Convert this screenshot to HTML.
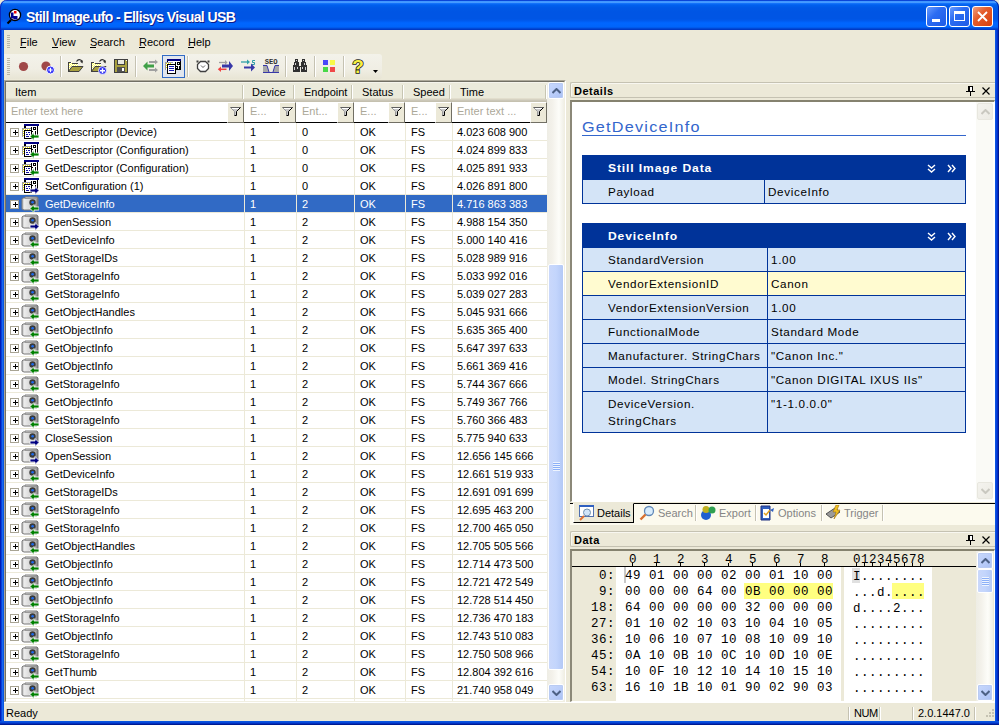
<!DOCTYPE html>
<html><head><meta charset="utf-8">
<style>
*{margin:0;padding:0;box-sizing:border-box}
html,body{width:999px;height:725px;overflow:hidden;background:#ECE9D8}
body{position:relative;font-family:"Liberation Sans",sans-serif;font-size:11px;color:#000}
div,svg,span{position:absolute}
.abs{position:absolute}
/* frame */
#tb{left:0;top:0;width:999px;height:30px;border-radius:7px 7px 0 0;box-shadow:inset 1px 0 0 #0828C0,inset -1px 0 0 #0020A0;
background:linear-gradient(to bottom,#0A45D8 0px,#0A45D8 1px,#3D95FF 1px,#4A9CFF 3px,#1A7AFF 3px,#0B6AF5 4px,#0060EE 5px,#0058E6 8px,#0055E4 12px,#0055E4 19px,#005BF0 21px,#0066FF 23px,#0064FA 27px,#0052E2 28px,#0040CC 29px,#0033BE 30px)}
#fl{left:0;top:30px;width:4px;height:695px;background:linear-gradient(to right,#001DB5 0,#001DB5 1px,#0840DC 1px,#0840DC 2px,#1767F0 2px,#1767F0 3px,#0A55E0 3px)}
#fr{left:995px;top:30px;width:4px;height:695px;background:linear-gradient(to right,#0A55E0 0,#0A55E0 1px,#0840DC 1px,#0840DC 2px,#0030C8 2px,#0030C8 3px,#001890 3px)}
#fb{left:0;top:721px;width:999px;height:4px;background:linear-gradient(to bottom,#0A55E0 0,#0A55E0 1px,#0848D8 1px,#0848D8 2px,#0030C0 2px,#0030C0 3px,#001A90 3px)}
#title{left:26px;top:8px;color:#fff;font-weight:bold;font-size:14px;letter-spacing:-0.6px;line-height:18px;white-space:nowrap;text-shadow:1px 1px 0 #0A1C8C}
.wbtn{top:6px;width:21px;height:21px;border:1px solid #fff;border-radius:3px;background:linear-gradient(135deg,#6A9CFF 0%,#2C6CF2 40%,#1E5AE6 100%)}
.wbtn.close{background:linear-gradient(135deg,#F0A080 0%,#E45C2C 40%,#D8400F 100%)}
/* menu */
.grip{width:3px;background:repeating-linear-gradient(to bottom,#B9B6A6 0,#B9B6A6 1px,transparent 1px,transparent 2px)}
.menu{top:36px;line-height:12px;white-space:nowrap}
.menu u{text-decoration:none}
.ul{top:47px;height:1px;width:6px;background:#000}
#tbband{left:4px;top:54px;width:378px;height:25px;background:linear-gradient(to bottom,#F3F2EA 0,#F0EEE4 60%,#E8E5D5 100%);border-radius:0 3px 3px 0}
.sep{top:56px;width:1px;height:21px;background:#C5C2B2;border-right:1px solid #fff;width:2px}
/* grid */
#grid{left:4px;top:80px;width:562px;height:623px;border-top:1px solid #ACA899;border-left:1px solid #ACA899;border-right:1px solid #fff;border-bottom:1px solid #fff;background:#fff}
#gridin{left:0;top:0;width:560px;height:621px;border-top:1px solid #716F64;border-left:1px solid #716F64;border-right:1px solid #F1EFE2;border-bottom:1px solid #F1EFE2}
.hdr{top:82px;height:20px;background:linear-gradient(to bottom,#F5F4EC 0,#F5F4EC 1px,#EBEADB 1px,#EBEADB 16px,#E2DECD 16px,#E2DECD 17px,#D6D2C2 17px,#D6D2C2 18px,#CBC7B8 18px,#CBC7B8 19px,#C5C1B0 19px)}
.htxt{top:83px;line-height:19px;white-space:nowrap}
.hsep{top:85px;width:1px;height:14px;background:#C7C5B2;border-right:1px solid #fff;width:2px}
.ftxt{top:101px;line-height:21px;color:#ACA899;white-space:nowrap}
.fbtn{top:102px;width:17px;height:21px;background:#ECE9D8;border-left:1px solid #fff;border-top:1px solid #fff;border-right:1px solid #716F64;border-bottom:1px solid #716F64}
.fline{top:122px;height:1px;background:#000}
.row{left:6px;width:541px;height:17px;background:#fff}
.row.sel{background:#316AC5}
.hl{left:6px;width:541px;height:1px;background:#ECE9D8}
.vl{top:123px;width:1px;height:578px;background:#ECE9D8}
.pbox{left:10px;width:9px;height:9px;border:1px solid #A8A493;background:#fff}
.pbox:before{content:"";position:absolute;left:2px;top:3px;width:5px;height:1px;background:#000}
.pbox:after{content:"";position:absolute;left:4px;top:1px;width:1px;height:5px;background:#000}
.t{line-height:17px;height:17px;white-space:nowrap}
.t.w{color:#fff}
/* scrollbars */
.strack{background:linear-gradient(to right,#EEEDE5 0,#F3F1EA 30%,#FDFDF9 70%,#F0EFE6 100%)}
.sbtn{width:16px;height:17px;border-radius:2px;border:1px solid #fff;background:linear-gradient(135deg,#C8D8FC 0,#BBCEFA 50%,#A9C0F3 100%);box-shadow:0 0 0 1px #B9CBF3 inset}
.sthumb{border-radius:2px;border:1px solid #fff;background:linear-gradient(to right,#CAD8FB 0,#C3D5FC 50%,#B4C9F6 100%)}
.sdis{width:16px;height:17px;border-radius:2px;border:1px solid #E8E7DF;background:linear-gradient(135deg,#F4F3EE 0,#ECEBE4 100%)}
/* details */
.phdr{height:16px;background:#ECE9D8;border-top:1px solid #C5C2B2;border-bottom:1px solid #C5C2B2;border-left:1px solid #C5C2B2;border-radius:2px 0 0 2px;box-shadow:inset 1px 1px 0 #F8F7F0}
.ptitle{font-weight:bold;line-height:14px;white-space:nowrap;letter-spacing:0.5px}
.pbody{background:#fff;border-top:2px solid #8B8878;border-left:2px solid #8B8878;border-top-color:#85826F;border-right:1px solid #fff;border-bottom:1px solid #fff}
.vt{font-size:11px;white-space:nowrap;line-height:14px;letter-spacing:0.62px;transform:scaleX(1.06);transform-origin:0 0}
.vtb{font-weight:bold;color:#fff;letter-spacing:0.8px;transform:scaleX(1.1)}
.dh{background:#003399;height:25px}
.dr{background:#D4E4F7;border-left:1px solid #003399;border-right:1px solid #003399;border-bottom:1px solid #003399}
.dr.y{background:#FFFBD0}
.dv{width:1px;background:#003399}
.mono{font-family:"Liberation Mono",monospace;font-size:12.5px;letter-spacing:0.5px;line-height:16px;white-space:pre}
/* tabs */
.tabt{top:505px;line-height:16px;color:#858585;white-space:nowrap}
/* status */
.stxt{top:704px;line-height:18px;white-space:nowrap}
.ssep{top:707px;width:2px;height:13px;border-left:1px solid #C5C2B2;border-right:1px solid #fff}
</style></head><body>
<!-- title bar -->
<div id="tb"></div>
<svg style="left:6px;top:8px" width="17" height="17" viewBox="0 0 17 17"><path d="M1.5 15.5L5 12" stroke="#000" stroke-width="2.2"/><circle cx="9" cy="7" r="5.6" fill="#fff" stroke="#000" stroke-width="1.3"/><path d="M5 4.5h2.5v6H5zM7.5 8h4v3.5h-4z" fill="#000090"/><rect x="8" y="3" width="2.5" height="2.5" fill="#f00000"/></svg>
<div id="title">Still Image.ufo - Ellisys Visual USB</div>
<div class="wbtn" style="left:926px"><div style="left:5px;top:12px;width:8px;height:3px;background:#fff"></div></div>
<div class="wbtn" style="left:949px"><div style="left:4px;top:4px;width:11px;height:10px;border:1px solid #fff;border-top-width:3px"></div></div>
<div class="wbtn close" style="left:972px"><svg style="left:4px;top:4px" width="11" height="11" viewBox="0 0 11 11"><path d="M1 1L10 10M10 1L1 10" stroke="#fff" stroke-width="1.8"/></svg></div>
<div id="fl"></div><div id="fr"></div><div id="fb"></div>

<!-- menu bar -->
<div class="grip" style="left:7px;top:35px;height:13px"></div>
<div class="menu" style="left:20px"><u>F</u>ile</div>
<div class="menu" style="left:52px"><u>V</u>iew</div>
<div class="menu" style="left:90px"><u>S</u>earch</div>
<div class="menu" style="left:139px"><u>R</u>ecord</div>
<div class="menu" style="left:188px"><u>H</u>elp</div>
<div class="ul" style="left:20px"></div><div class="ul" style="left:52px"></div><div class="ul" style="left:90px"></div><div class="ul" style="left:139px"></div><div class="ul" style="left:188px"></div>

<!-- toolbar -->
<div id="tbband"></div>
<div class="grip" style="left:7px;top:58px;height:17px"></div>
<svg style="left:18px;top:61px" width="11" height="11"><circle cx="5.5" cy="5.5" r="4.6" fill="#A04848"/></svg>
<svg style="left:40px;top:60px" width="16" height="15"><circle cx="6" cy="6" r="4.6" fill="#A04848"/><circle cx="10.5" cy="10" r="4" fill="#3434F8" stroke="#fff" stroke-width="1"/><path d="M8.3 10h4.4M10.5 7.8v4.4" stroke="#fff" stroke-width="1.2"/></svg>
<div class="sep" style="left:60px"></div>
<svg style="left:67px;top:58px" width="17" height="15" viewBox="0 0 17 15" shape-rendering="crispEdges"><defs><pattern id="chk" width="2" height="2" patternUnits="userSpaceOnUse"><rect width="2" height="2" fill="#FFFF60"/><rect width="1" height="1" fill="#fff"/><rect x="1" y="1" width="1" height="1" fill="#fff"/></pattern></defs><path d="M1 4h3l1 1h6v9H1z" fill="url(#chk)"/><path d="M1 4h3M5 5h6M1 4v10" stroke="#404040" fill="none"/><path d="M1.5 13.5L5 8.5h11l-4 5z" fill="#A8A040" stroke="#404040" stroke-width="1" shape-rendering="geometricPrecision"/><path d="M9.5 3.5Q12 0 15 3" fill="none" stroke="#303030" stroke-width="1.2" shape-rendering="geometricPrecision"/><path d="M13 3.5L16 2.5 15.5 5.5z" fill="#303030" shape-rendering="geometricPrecision"/></svg>
<svg style="left:90px;top:58px" width="17" height="17" viewBox="0 0 17 17" shape-rendering="crispEdges"><path d="M1 4h3l1 1h6v9H1z" fill="url(#chk)"/><path d="M1 4h3M5 5h6M1 4v10" stroke="#404040" fill="none"/><path d="M1.5 13.5L5 8.5h11l-4 5z" fill="#A8A040" stroke="#404040" stroke-width="1" shape-rendering="geometricPrecision"/><path d="M9.5 3.5Q12 0 15 3" fill="none" stroke="#303030" stroke-width="1.2" shape-rendering="geometricPrecision"/><path d="M13 3.5L16 2.5 15.5 5.5z" fill="#303030" shape-rendering="geometricPrecision"/><circle cx="12.5" cy="12.5" r="4" fill="#3434F0" stroke="#fff" stroke-width="0.8" shape-rendering="geometricPrecision"/><path d="M10 12h5v1.4h-5zM11.8 10.2h1.4v5h-1.4z" fill="#fff" shape-rendering="geometricPrecision"/></svg>
<svg style="left:114px;top:59px" width="14" height="14" viewBox="0 0 14 14" shape-rendering="crispEdges"><rect x="0" y="0" width="14" height="14" fill="#404040"/><rect x="1" y="1" width="12" height="12" fill="#A8A040"/><rect x="3" y="0" width="8" height="6" fill="#404040"/><rect x="4" y="1" width="6" height="4" fill="#E8E8E0"/><rect x="3" y="8" width="8" height="5" fill="#505050"/><rect x="8" y="9" width="2" height="3" fill="#fff"/><rect x="12" y="1" width="1" height="1" fill="#fff"/></svg>
<div class="sep" style="left:135px"></div>
<svg style="left:142px;top:58px" width="17" height="16" viewBox="0 0 17 16" shape-rendering="crispEdges"><path d="M7 3h6v2H7zM7 11h6v2H7z" fill="#A0A0A0"/><path d="M13 1.5L16 4 13 6.5zM13 9.5L16 12 13 14.5z" fill="#A0A0A0" shape-rendering="geometricPrecision"/><path d="M1 8L5.5 3.5V6.5H12V9.5H5.5V12.5z" fill="#40A048" shape-rendering="geometricPrecision"/></svg>
<div style="left:162px;top:55px;width:23px;height:23px;border:1px solid #316AC5;background:#E1E6EE"></div>
<svg style="left:165px;top:58px" width="17" height="16" viewBox="0 0 17 16" shape-rendering="crispEdges"><rect x="2" y="1" width="14" height="2" fill="#000080"/><rect x="2" y="3" width="14" height="9" fill="#000"/><rect x="3" y="3" width="12" height="8" fill="#fff"/><path d="M10 4h1v3h-1zM12 4h3v3h-3zM10 8h3v3h-3zM14 8h1v3h-1z" fill="#000"/><rect x="13" y="5" width="1" height="1" fill="#fff"/><rect x="11" y="9" width="1" height="1" fill="#fff"/><rect x="0" y="4" width="8" height="8" fill="#9C9CA8"/><rect x="1" y="5" width="7" height="7" fill="#fff"/><path d="M1 5h1v1H1zM3 5h1v1H3zM5 5h1v1H5zM1 7h1v1H1zM1 9h1v1H1z" fill="#F0E000"/><rect x="2" y="6" width="9" height="10" fill="#000"/><rect x="3" y="7" width="7" height="8" fill="#fff"/><path d="M4 8h5v1H4zM4 10h5v1H4zM4 12h5v1H4z" fill="#1818B0"/></svg>
<div class="sep" style="left:187px"></div>
<svg style="left:196px;top:60px" width="14" height="13" viewBox="0 0 14 13"><path d="M4.5 1.5H9.5L12.5 4.5V8.5L9.5 11.5H4.5L1.5 8.5V4.5Z" fill="#fff" stroke="#404040" stroke-width="1.3"/><rect x="0.5" y="0.5" width="2" height="2" fill="#404040"/><rect x="11.5" y="0.5" width="2" height="2" fill="#404040"/><path d="M5 5.5L7 7.5 9 5.5" fill="none" stroke="#505050" stroke-width="0.9"/></svg>
<svg style="left:217px;top:59px" width="17" height="14" viewBox="0 0 17 14"><path d="M2 3.5H8" stroke="#A0A0A0" stroke-width="1.3"/><path d="M8 1L10.5 3.5 8 6z" fill="#A0A0A0"/><path d="M5 5.5H12.5V8.5H5z" fill="#3838A8"/><path d="M12 2L16 7 12 12z" fill="#3838A8"/><path d="M3 10.3H9.5" stroke="#F04040" stroke-width="1.5"/><path d="M4 7.5L0.8 10.3 4 13z" fill="#F04040"/></svg>
<svg style="left:240px;top:58px" width="17" height="15" viewBox="0 0 17 15"><path d="M1 4H8" stroke="#30A0A8" stroke-width="1.3"/><path d="M7 1.5L10 4 7 6.5z" fill="#30A0A8"/><path d="M15 2.5H12.5V4.5H14.5V6.5H12" fill="none" stroke="#30A0A8" stroke-width="1"/><path d="M4 8.5H12V10.5H4z" fill="#3838A8"/><path d="M11 5.5L15 9.5 11 13.5z" fill="#3838A8"/></svg>
<svg style="left:262px;top:58px" width="18" height="16" viewBox="0 0 18 16"><text x="2.7" y="6.3" font-size="7.2" font-weight="bold" fill="#303030" font-family="Liberation Mono">SEO</text><path d="M1 8H5L7 14H1ZM17 8H13L11 14H17Z" fill="#A8A8A8"/><path d="M1 7.5H5L7 14M11 14L13 7.5H17M1 14.5H17" fill="none" stroke="#3838A8" stroke-width="1"/></svg>
<div class="sep" style="left:285px"></div>
<svg style="left:292px;top:59px" width="17" height="14" viewBox="0 0 17 14" shape-rendering="crispEdges"><path d="M3 0h3v3h1v4h2V3h1V0h3v3h1v3h1v7h-6V8H8v5H1V6h1V3h1z" fill="#303030"/><path d="M4 1h1v1H4zM11 1h1v1h-1zM3 4h1v2H3zM12 4h1v2h-1zM2 8h1v3H2zM5 8h1v2H5zM10 8h1v2h-1zM13 8h1v3h-1z" fill="#D0D0D0"/></svg>
<div class="sep" style="left:314px"></div>
<svg style="left:322px;top:59px" width="14" height="14"><rect x="1" y="1" width="5" height="5" fill="#4848F8"/><rect x="8" y="1" width="5" height="5" fill="#F8F848"/><rect x="1" y="8" width="5" height="5" fill="#48D848"/><rect x="8" y="8" width="5" height="5" fill="#F04848"/></svg>
<div class="sep" style="left:343px"></div>
<svg style="left:351px;top:57px" width="14" height="17" viewBox="0 0 14 17"><text x="1.2" y="15.5" font-size="19" font-weight="bold" fill="#F8F040" stroke="#202020" stroke-width="1.6" paint-order="stroke" font-family="Liberation Sans">?</text></svg>
<svg style="left:373px;top:70px" width="6" height="4"><path d="M0 0h5L2.5 3z" fill="#000"/></svg>

<!-- grid -->
<div id="grid"><div id="gridin"></div></div>
<div class="hdr" style="left:6px;width:541px"></div>
<div class="hsep" style="left:242px"></div>
<div class="hsep" style="left:293px"></div>
<div class="hsep" style="left:351px"></div>
<div class="hsep" style="left:402px"></div>
<div class="hsep" style="left:449px"></div>
<div class="hsep" style="left:545px"></div>
<div class="htxt" style="left:15px">Item</div>
<div class="htxt" style="left:252px">Device</div>
<div class="htxt" style="left:304px">Endpoint</div>
<div class="htxt" style="left:362px">Status</div>
<div class="htxt" style="left:413px">Speed</div>
<div class="htxt" style="left:460px">Time</div>
<div class="ftxt" style="left:11px">Enter text here</div>
<div class="ftxt" style="left:250px">E...</div>
<div class="ftxt" style="left:302px">Ent...</div>
<div class="ftxt" style="left:360px">E...</div>
<div class="ftxt" style="left:411px">E...</div>
<div class="ftxt" style="left:457px">Enter text ...</div>
<div class="fline" style="left:6px;width:222px"></div>
<div class="fline" style="left:244px;width:37px"></div>
<div class="fline" style="left:296px;width:42px"></div>
<div class="fline" style="left:354px;width:35px"></div>
<div class="fline" style="left:405px;width:31px"></div>
<div class="fline" style="left:452px;width:79px"></div>
<div class="fbtn" style="left:227px"><svg style="left:1px;top:3px" width="13" height="11" viewBox="0 0 13 11"><path d="M1.5 1.5H11.5L7.5 5.5V9.5H5.5V5.5Z" fill="#C8C8C8"/><path d="M1.5 1.5L5.5 5.5V9.5" fill="none" stroke="#9A9A9A"/><path d="M1.5 1.5H11.5" stroke="#606060"/><path d="M11.5 1.5L7.5 5.5V9.5H5.5" fill="none" stroke="#000"/><path d="M3 2.5H10" stroke="#fff"/></svg></div><div class="fbtn" style="left:279px"><svg style="left:1px;top:3px" width="13" height="11" viewBox="0 0 13 11"><path d="M1.5 1.5H11.5L7.5 5.5V9.5H5.5V5.5Z" fill="#C8C8C8"/><path d="M1.5 1.5L5.5 5.5V9.5" fill="none" stroke="#9A9A9A"/><path d="M1.5 1.5H11.5" stroke="#606060"/><path d="M11.5 1.5L7.5 5.5V9.5H5.5" fill="none" stroke="#000"/><path d="M3 2.5H10" stroke="#fff"/></svg></div><div class="fbtn" style="left:337px"><svg style="left:1px;top:3px" width="13" height="11" viewBox="0 0 13 11"><path d="M1.5 1.5H11.5L7.5 5.5V9.5H5.5V5.5Z" fill="#C8C8C8"/><path d="M1.5 1.5L5.5 5.5V9.5" fill="none" stroke="#9A9A9A"/><path d="M1.5 1.5H11.5" stroke="#606060"/><path d="M11.5 1.5L7.5 5.5V9.5H5.5" fill="none" stroke="#000"/><path d="M3 2.5H10" stroke="#fff"/></svg></div><div class="fbtn" style="left:388px"><svg style="left:1px;top:3px" width="13" height="11" viewBox="0 0 13 11"><path d="M1.5 1.5H11.5L7.5 5.5V9.5H5.5V5.5Z" fill="#C8C8C8"/><path d="M1.5 1.5L5.5 5.5V9.5" fill="none" stroke="#9A9A9A"/><path d="M1.5 1.5H11.5" stroke="#606060"/><path d="M11.5 1.5L7.5 5.5V9.5H5.5" fill="none" stroke="#000"/><path d="M3 2.5H10" stroke="#fff"/></svg></div><div class="fbtn" style="left:435px"><svg style="left:1px;top:3px" width="13" height="11" viewBox="0 0 13 11"><path d="M1.5 1.5H11.5L7.5 5.5V9.5H5.5V5.5Z" fill="#C8C8C8"/><path d="M1.5 1.5L5.5 5.5V9.5" fill="none" stroke="#9A9A9A"/><path d="M1.5 1.5H11.5" stroke="#606060"/><path d="M11.5 1.5L7.5 5.5V9.5H5.5" fill="none" stroke="#000"/><path d="M3 2.5H10" stroke="#fff"/></svg></div><div class="fbtn" style="left:530px"><svg style="left:1px;top:3px" width="13" height="11" viewBox="0 0 13 11"><path d="M1.5 1.5H11.5L7.5 5.5V9.5H5.5V5.5Z" fill="#C8C8C8"/><path d="M1.5 1.5L5.5 5.5V9.5" fill="none" stroke="#9A9A9A"/><path d="M1.5 1.5H11.5" stroke="#606060"/><path d="M11.5 1.5L7.5 5.5V9.5H5.5" fill="none" stroke="#000"/><path d="M3 2.5H10" stroke="#fff"/></svg></div>
<div class="row" style="top:123px"></div><div class="row" style="top:141px"></div><div class="row" style="top:159px"></div><div class="row" style="top:177px"></div><div class="row sel" style="top:195px"></div><div class="row" style="top:213px"></div><div class="row" style="top:231px"></div><div class="row" style="top:249px"></div><div class="row" style="top:267px"></div><div class="row" style="top:285px"></div><div class="row" style="top:303px"></div><div class="row" style="top:321px"></div><div class="row" style="top:339px"></div><div class="row" style="top:357px"></div><div class="row" style="top:375px"></div><div class="row" style="top:393px"></div><div class="row" style="top:411px"></div><div class="row" style="top:429px"></div><div class="row" style="top:447px"></div><div class="row" style="top:465px"></div><div class="row" style="top:483px"></div><div class="row" style="top:501px"></div><div class="row" style="top:519px"></div><div class="row" style="top:537px"></div><div class="row" style="top:555px"></div><div class="row" style="top:573px"></div><div class="row" style="top:591px"></div><div class="row" style="top:609px"></div><div class="row" style="top:627px"></div><div class="row" style="top:645px"></div><div class="row" style="top:663px"></div><div class="row" style="top:681px"></div><div class="hl" style="top:140px"></div><div class="hl" style="top:158px"></div><div class="hl" style="top:176px"></div><div class="hl" style="top:194px"></div><div class="hl" style="top:212px"></div><div class="hl" style="top:230px"></div><div class="hl" style="top:248px"></div><div class="hl" style="top:266px"></div><div class="hl" style="top:284px"></div><div class="hl" style="top:302px"></div><div class="hl" style="top:320px"></div><div class="hl" style="top:338px"></div><div class="hl" style="top:356px"></div><div class="hl" style="top:374px"></div><div class="hl" style="top:392px"></div><div class="hl" style="top:410px"></div><div class="hl" style="top:428px"></div><div class="hl" style="top:446px"></div><div class="hl" style="top:464px"></div><div class="hl" style="top:482px"></div><div class="hl" style="top:500px"></div><div class="hl" style="top:518px"></div><div class="hl" style="top:536px"></div><div class="hl" style="top:554px"></div><div class="hl" style="top:572px"></div><div class="hl" style="top:590px"></div><div class="hl" style="top:608px"></div><div class="hl" style="top:626px"></div><div class="hl" style="top:644px"></div><div class="hl" style="top:662px"></div><div class="hl" style="top:680px"></div><div class="hl" style="top:698px"></div><div class="vl" style="left:244px"></div><div class="vl" style="left:296px"></div><div class="vl" style="left:354px"></div><div class="vl" style="left:405px"></div><div class="vl" style="left:452px"></div><div class="pbox" style="top:128px"></div><svg class="ic" style="left:21px;top:123px" width="18" height="18" viewBox="0 0 18 18" shape-rendering="crispEdges"><rect x="3" y="1" width="15" height="2" fill="#000080"/><rect x="3" y="3" width="15" height="9" fill="#fff"/><rect x="3" y="3" width="2" height="8" fill="#000"/><rect x="16" y="3" width="1" height="9" fill="#000"/><rect x="10" y="4" width="1" height="3" fill="#000"/><rect x="12" y="4" width="3" height="3" fill="#000"/><rect x="13" y="5" width="1" height="1" fill="#fff"/><rect x="10" y="8" width="2" height="1" fill="#000"/><rect x="10" y="9" width="1" height="2" fill="#000"/><rect x="14" y="8" width="1" height="4" fill="#000"/><rect x="1" y="5" width="9" height="9" fill="#9C9CA8"/><rect x="2" y="6" width="8" height="8" fill="#fff"/><path d="M2 6h1v1H2zM4 6h1v1H4zM6 6h1v1H6zM8 6h1v1H8zM2 8h1v1H2zM2 10h1v1H2zM2 12h1v1H2z" fill="#F0E000"/><rect x="3" y="7" width="8" height="9" fill="#000"/><rect x="4" y="8" width="6" height="7" fill="#fff"/><path d="M5 9h1v1H5zM7 9h2v1H7zM5 11h2v1H5zM8 11h1v1H8zM5 13h3v1H5z" fill="#1010A0"/><path d="M9 13.5L13 9.5V12h5v3h-5v2.5z" fill="#008000" stroke="#fff" stroke-width="0.8" shape-rendering="geometricPrecision"/></svg><div class="t" style="left:45px;top:124px">GetDescriptor (Device)</div><div class="t" style="left:250px;top:124px">1</div><div class="t" style="left:302px;top:124px">0</div><div class="t" style="left:360px;top:124px">OK</div><div class="t" style="left:411px;top:124px">FS</div><div class="t" style="left:457px;top:124px">4.023 608 900</div><div class="pbox" style="top:146px"></div><svg class="ic" style="left:21px;top:141px" width="18" height="18" viewBox="0 0 18 18" shape-rendering="crispEdges"><rect x="3" y="1" width="15" height="2" fill="#000080"/><rect x="3" y="3" width="15" height="9" fill="#fff"/><rect x="3" y="3" width="2" height="8" fill="#000"/><rect x="16" y="3" width="1" height="9" fill="#000"/><rect x="10" y="4" width="1" height="3" fill="#000"/><rect x="12" y="4" width="3" height="3" fill="#000"/><rect x="13" y="5" width="1" height="1" fill="#fff"/><rect x="10" y="8" width="2" height="1" fill="#000"/><rect x="10" y="9" width="1" height="2" fill="#000"/><rect x="14" y="8" width="1" height="4" fill="#000"/><rect x="1" y="5" width="9" height="9" fill="#9C9CA8"/><rect x="2" y="6" width="8" height="8" fill="#fff"/><path d="M2 6h1v1H2zM4 6h1v1H4zM6 6h1v1H6zM8 6h1v1H8zM2 8h1v1H2zM2 10h1v1H2zM2 12h1v1H2z" fill="#F0E000"/><rect x="3" y="7" width="8" height="9" fill="#000"/><rect x="4" y="8" width="6" height="7" fill="#fff"/><path d="M5 9h1v1H5zM7 9h2v1H7zM5 11h2v1H5zM8 11h1v1H8zM5 13h3v1H5z" fill="#1010A0"/><path d="M9 13.5L13 9.5V12h5v3h-5v2.5z" fill="#008000" stroke="#fff" stroke-width="0.8" shape-rendering="geometricPrecision"/></svg><div class="t" style="left:45px;top:142px">GetDescriptor (Configuration)</div><div class="t" style="left:250px;top:142px">1</div><div class="t" style="left:302px;top:142px">0</div><div class="t" style="left:360px;top:142px">OK</div><div class="t" style="left:411px;top:142px">FS</div><div class="t" style="left:457px;top:142px">4.024 899 833</div><div class="pbox" style="top:164px"></div><svg class="ic" style="left:21px;top:159px" width="18" height="18" viewBox="0 0 18 18" shape-rendering="crispEdges"><rect x="3" y="1" width="15" height="2" fill="#000080"/><rect x="3" y="3" width="15" height="9" fill="#fff"/><rect x="3" y="3" width="2" height="8" fill="#000"/><rect x="16" y="3" width="1" height="9" fill="#000"/><rect x="10" y="4" width="1" height="3" fill="#000"/><rect x="12" y="4" width="3" height="3" fill="#000"/><rect x="13" y="5" width="1" height="1" fill="#fff"/><rect x="10" y="8" width="2" height="1" fill="#000"/><rect x="10" y="9" width="1" height="2" fill="#000"/><rect x="14" y="8" width="1" height="4" fill="#000"/><rect x="1" y="5" width="9" height="9" fill="#9C9CA8"/><rect x="2" y="6" width="8" height="8" fill="#fff"/><path d="M2 6h1v1H2zM4 6h1v1H4zM6 6h1v1H6zM8 6h1v1H8zM2 8h1v1H2zM2 10h1v1H2zM2 12h1v1H2z" fill="#F0E000"/><rect x="3" y="7" width="8" height="9" fill="#000"/><rect x="4" y="8" width="6" height="7" fill="#fff"/><path d="M5 9h1v1H5zM7 9h2v1H7zM5 11h2v1H5zM8 11h1v1H8zM5 13h3v1H5z" fill="#1010A0"/><path d="M9 13.5L13 9.5V12h5v3h-5v2.5z" fill="#008000" stroke="#fff" stroke-width="0.8" shape-rendering="geometricPrecision"/></svg><div class="t" style="left:45px;top:160px">GetDescriptor (Configuration)</div><div class="t" style="left:250px;top:160px">1</div><div class="t" style="left:302px;top:160px">0</div><div class="t" style="left:360px;top:160px">OK</div><div class="t" style="left:411px;top:160px">FS</div><div class="t" style="left:457px;top:160px">4.025 891 933</div><div class="pbox" style="top:182px"></div><svg class="ic" style="left:21px;top:177px" width="18" height="18" viewBox="0 0 18 18" shape-rendering="crispEdges"><rect x="3" y="1" width="15" height="2" fill="#000080"/><rect x="3" y="3" width="15" height="9" fill="#fff"/><rect x="3" y="3" width="2" height="8" fill="#000"/><rect x="16" y="3" width="1" height="9" fill="#000"/><rect x="10" y="4" width="1" height="3" fill="#000"/><rect x="12" y="4" width="3" height="3" fill="#000"/><rect x="13" y="5" width="1" height="1" fill="#fff"/><rect x="10" y="8" width="2" height="1" fill="#000"/><rect x="10" y="9" width="1" height="2" fill="#000"/><rect x="14" y="8" width="1" height="4" fill="#000"/><rect x="1" y="5" width="9" height="9" fill="#9C9CA8"/><rect x="2" y="6" width="8" height="8" fill="#fff"/><path d="M2 6h1v1H2zM4 6h1v1H4zM6 6h1v1H6zM8 6h1v1H8zM2 8h1v1H2zM2 10h1v1H2zM2 12h1v1H2z" fill="#F0E000"/><rect x="3" y="7" width="8" height="9" fill="#000"/><rect x="4" y="8" width="6" height="7" fill="#fff"/><path d="M5 9h1v1H5zM7 9h2v1H7zM5 11h2v1H5zM8 11h1v1H8zM5 13h3v1H5z" fill="#1010A0"/><path d="M18 13.5L14 9.5V12H9v3h5v2.5z" fill="#000080" stroke="#fff" stroke-width="0.8" shape-rendering="geometricPrecision"/></svg><div class="t" style="left:45px;top:178px">SetConfiguration (1)</div><div class="t" style="left:250px;top:178px">1</div><div class="t" style="left:302px;top:178px">0</div><div class="t" style="left:360px;top:178px">OK</div><div class="t" style="left:411px;top:178px">FS</div><div class="t" style="left:457px;top:178px">4.026 891 800</div><div class="pbox" style="top:200px"></div><svg class="ic" style="left:21px;top:195px" width="18" height="18" viewBox="0 0 18 18" shape-rendering="crispEdges"><defs><linearGradient id="cg" x1="0" x2="1"><stop offset="0" stop-color="#B8B8B8"/><stop offset="0.15" stop-color="#ECECEC"/><stop offset="0.5" stop-color="#D8D8D8"/><stop offset="0.85" stop-color="#B0B0B0"/><stop offset="1" stop-color="#707070"/></linearGradient></defs><path d="M1 4L2 3h2V2h12l1 1v11l-1 1H3l-2-1z" fill="url(#cg)" stroke="#7A7A7A" stroke-width="1" shape-rendering="geometricPrecision"/><path d="M4 3h12" stroke="#9A9A9A" stroke-width="1"/><circle cx="11.5" cy="7.5" r="3.2" fill="#3A3A3A" shape-rendering="geometricPrecision"/><circle cx="11.6" cy="7.2" r="1.3" fill="#1E6CF0" shape-rendering="geometricPrecision"/><path d="M9 13.5L13 9.5V12h5v3h-5v2.5z" fill="#008000" stroke="#fff" stroke-width="0.8" shape-rendering="geometricPrecision"/></svg><div class="t w" style="left:45px;top:196px">GetDeviceInfo</div><div class="t w" style="left:250px;top:196px">1</div><div class="t w" style="left:302px;top:196px">2</div><div class="t w" style="left:360px;top:196px">OK</div><div class="t w" style="left:411px;top:196px">FS</div><div class="t w" style="left:457px;top:196px">4.716 863 383</div><div class="pbox" style="top:218px"></div><svg class="ic" style="left:21px;top:213px" width="18" height="18" viewBox="0 0 18 18" shape-rendering="crispEdges"><defs><linearGradient id="cg" x1="0" x2="1"><stop offset="0" stop-color="#B8B8B8"/><stop offset="0.15" stop-color="#ECECEC"/><stop offset="0.5" stop-color="#D8D8D8"/><stop offset="0.85" stop-color="#B0B0B0"/><stop offset="1" stop-color="#707070"/></linearGradient></defs><path d="M1 4L2 3h2V2h12l1 1v11l-1 1H3l-2-1z" fill="url(#cg)" stroke="#7A7A7A" stroke-width="1" shape-rendering="geometricPrecision"/><path d="M4 3h12" stroke="#9A9A9A" stroke-width="1"/><circle cx="11.5" cy="7.5" r="3.2" fill="#3A3A3A" shape-rendering="geometricPrecision"/><circle cx="11.6" cy="7.2" r="1.3" fill="#1E6CF0" shape-rendering="geometricPrecision"/><path d="M18 13.5L14 9.5V12H9v3h5v2.5z" fill="#000080" stroke="#fff" stroke-width="0.8" shape-rendering="geometricPrecision"/></svg><div class="t" style="left:45px;top:214px">OpenSession</div><div class="t" style="left:250px;top:214px">1</div><div class="t" style="left:302px;top:214px">2</div><div class="t" style="left:360px;top:214px">OK</div><div class="t" style="left:411px;top:214px">FS</div><div class="t" style="left:457px;top:214px">4.988 154 350</div><div class="pbox" style="top:236px"></div><svg class="ic" style="left:21px;top:231px" width="18" height="18" viewBox="0 0 18 18" shape-rendering="crispEdges"><defs><linearGradient id="cg" x1="0" x2="1"><stop offset="0" stop-color="#B8B8B8"/><stop offset="0.15" stop-color="#ECECEC"/><stop offset="0.5" stop-color="#D8D8D8"/><stop offset="0.85" stop-color="#B0B0B0"/><stop offset="1" stop-color="#707070"/></linearGradient></defs><path d="M1 4L2 3h2V2h12l1 1v11l-1 1H3l-2-1z" fill="url(#cg)" stroke="#7A7A7A" stroke-width="1" shape-rendering="geometricPrecision"/><path d="M4 3h12" stroke="#9A9A9A" stroke-width="1"/><circle cx="11.5" cy="7.5" r="3.2" fill="#3A3A3A" shape-rendering="geometricPrecision"/><circle cx="11.6" cy="7.2" r="1.3" fill="#1E6CF0" shape-rendering="geometricPrecision"/><path d="M9 13.5L13 9.5V12h5v3h-5v2.5z" fill="#008000" stroke="#fff" stroke-width="0.8" shape-rendering="geometricPrecision"/></svg><div class="t" style="left:45px;top:232px">GetDeviceInfo</div><div class="t" style="left:250px;top:232px">1</div><div class="t" style="left:302px;top:232px">2</div><div class="t" style="left:360px;top:232px">OK</div><div class="t" style="left:411px;top:232px">FS</div><div class="t" style="left:457px;top:232px">5.000 140 416</div><div class="pbox" style="top:254px"></div><svg class="ic" style="left:21px;top:249px" width="18" height="18" viewBox="0 0 18 18" shape-rendering="crispEdges"><defs><linearGradient id="cg" x1="0" x2="1"><stop offset="0" stop-color="#B8B8B8"/><stop offset="0.15" stop-color="#ECECEC"/><stop offset="0.5" stop-color="#D8D8D8"/><stop offset="0.85" stop-color="#B0B0B0"/><stop offset="1" stop-color="#707070"/></linearGradient></defs><path d="M1 4L2 3h2V2h12l1 1v11l-1 1H3l-2-1z" fill="url(#cg)" stroke="#7A7A7A" stroke-width="1" shape-rendering="geometricPrecision"/><path d="M4 3h12" stroke="#9A9A9A" stroke-width="1"/><circle cx="11.5" cy="7.5" r="3.2" fill="#3A3A3A" shape-rendering="geometricPrecision"/><circle cx="11.6" cy="7.2" r="1.3" fill="#1E6CF0" shape-rendering="geometricPrecision"/><path d="M9 13.5L13 9.5V12h5v3h-5v2.5z" fill="#008000" stroke="#fff" stroke-width="0.8" shape-rendering="geometricPrecision"/></svg><div class="t" style="left:45px;top:250px">GetStorageIDs</div><div class="t" style="left:250px;top:250px">1</div><div class="t" style="left:302px;top:250px">2</div><div class="t" style="left:360px;top:250px">OK</div><div class="t" style="left:411px;top:250px">FS</div><div class="t" style="left:457px;top:250px">5.028 989 916</div><div class="pbox" style="top:272px"></div><svg class="ic" style="left:21px;top:267px" width="18" height="18" viewBox="0 0 18 18" shape-rendering="crispEdges"><defs><linearGradient id="cg" x1="0" x2="1"><stop offset="0" stop-color="#B8B8B8"/><stop offset="0.15" stop-color="#ECECEC"/><stop offset="0.5" stop-color="#D8D8D8"/><stop offset="0.85" stop-color="#B0B0B0"/><stop offset="1" stop-color="#707070"/></linearGradient></defs><path d="M1 4L2 3h2V2h12l1 1v11l-1 1H3l-2-1z" fill="url(#cg)" stroke="#7A7A7A" stroke-width="1" shape-rendering="geometricPrecision"/><path d="M4 3h12" stroke="#9A9A9A" stroke-width="1"/><circle cx="11.5" cy="7.5" r="3.2" fill="#3A3A3A" shape-rendering="geometricPrecision"/><circle cx="11.6" cy="7.2" r="1.3" fill="#1E6CF0" shape-rendering="geometricPrecision"/><path d="M9 13.5L13 9.5V12h5v3h-5v2.5z" fill="#008000" stroke="#fff" stroke-width="0.8" shape-rendering="geometricPrecision"/></svg><div class="t" style="left:45px;top:268px">GetStorageInfo</div><div class="t" style="left:250px;top:268px">1</div><div class="t" style="left:302px;top:268px">2</div><div class="t" style="left:360px;top:268px">OK</div><div class="t" style="left:411px;top:268px">FS</div><div class="t" style="left:457px;top:268px">5.033 992 016</div><div class="pbox" style="top:290px"></div><svg class="ic" style="left:21px;top:285px" width="18" height="18" viewBox="0 0 18 18" shape-rendering="crispEdges"><defs><linearGradient id="cg" x1="0" x2="1"><stop offset="0" stop-color="#B8B8B8"/><stop offset="0.15" stop-color="#ECECEC"/><stop offset="0.5" stop-color="#D8D8D8"/><stop offset="0.85" stop-color="#B0B0B0"/><stop offset="1" stop-color="#707070"/></linearGradient></defs><path d="M1 4L2 3h2V2h12l1 1v11l-1 1H3l-2-1z" fill="url(#cg)" stroke="#7A7A7A" stroke-width="1" shape-rendering="geometricPrecision"/><path d="M4 3h12" stroke="#9A9A9A" stroke-width="1"/><circle cx="11.5" cy="7.5" r="3.2" fill="#3A3A3A" shape-rendering="geometricPrecision"/><circle cx="11.6" cy="7.2" r="1.3" fill="#1E6CF0" shape-rendering="geometricPrecision"/><path d="M9 13.5L13 9.5V12h5v3h-5v2.5z" fill="#008000" stroke="#fff" stroke-width="0.8" shape-rendering="geometricPrecision"/></svg><div class="t" style="left:45px;top:286px">GetStorageInfo</div><div class="t" style="left:250px;top:286px">1</div><div class="t" style="left:302px;top:286px">2</div><div class="t" style="left:360px;top:286px">OK</div><div class="t" style="left:411px;top:286px">FS</div><div class="t" style="left:457px;top:286px">5.039 027 283</div><div class="pbox" style="top:308px"></div><svg class="ic" style="left:21px;top:303px" width="18" height="18" viewBox="0 0 18 18" shape-rendering="crispEdges"><defs><linearGradient id="cg" x1="0" x2="1"><stop offset="0" stop-color="#B8B8B8"/><stop offset="0.15" stop-color="#ECECEC"/><stop offset="0.5" stop-color="#D8D8D8"/><stop offset="0.85" stop-color="#B0B0B0"/><stop offset="1" stop-color="#707070"/></linearGradient></defs><path d="M1 4L2 3h2V2h12l1 1v11l-1 1H3l-2-1z" fill="url(#cg)" stroke="#7A7A7A" stroke-width="1" shape-rendering="geometricPrecision"/><path d="M4 3h12" stroke="#9A9A9A" stroke-width="1"/><circle cx="11.5" cy="7.5" r="3.2" fill="#3A3A3A" shape-rendering="geometricPrecision"/><circle cx="11.6" cy="7.2" r="1.3" fill="#1E6CF0" shape-rendering="geometricPrecision"/><path d="M9 13.5L13 9.5V12h5v3h-5v2.5z" fill="#008000" stroke="#fff" stroke-width="0.8" shape-rendering="geometricPrecision"/></svg><div class="t" style="left:45px;top:304px">GetObjectHandles</div><div class="t" style="left:250px;top:304px">1</div><div class="t" style="left:302px;top:304px">2</div><div class="t" style="left:360px;top:304px">OK</div><div class="t" style="left:411px;top:304px">FS</div><div class="t" style="left:457px;top:304px">5.045 931 666</div><div class="pbox" style="top:326px"></div><svg class="ic" style="left:21px;top:321px" width="18" height="18" viewBox="0 0 18 18" shape-rendering="crispEdges"><defs><linearGradient id="cg" x1="0" x2="1"><stop offset="0" stop-color="#B8B8B8"/><stop offset="0.15" stop-color="#ECECEC"/><stop offset="0.5" stop-color="#D8D8D8"/><stop offset="0.85" stop-color="#B0B0B0"/><stop offset="1" stop-color="#707070"/></linearGradient></defs><path d="M1 4L2 3h2V2h12l1 1v11l-1 1H3l-2-1z" fill="url(#cg)" stroke="#7A7A7A" stroke-width="1" shape-rendering="geometricPrecision"/><path d="M4 3h12" stroke="#9A9A9A" stroke-width="1"/><circle cx="11.5" cy="7.5" r="3.2" fill="#3A3A3A" shape-rendering="geometricPrecision"/><circle cx="11.6" cy="7.2" r="1.3" fill="#1E6CF0" shape-rendering="geometricPrecision"/><path d="M9 13.5L13 9.5V12h5v3h-5v2.5z" fill="#008000" stroke="#fff" stroke-width="0.8" shape-rendering="geometricPrecision"/></svg><div class="t" style="left:45px;top:322px">GetObjectInfo</div><div class="t" style="left:250px;top:322px">1</div><div class="t" style="left:302px;top:322px">2</div><div class="t" style="left:360px;top:322px">OK</div><div class="t" style="left:411px;top:322px">FS</div><div class="t" style="left:457px;top:322px">5.635 365 400</div><div class="pbox" style="top:344px"></div><svg class="ic" style="left:21px;top:339px" width="18" height="18" viewBox="0 0 18 18" shape-rendering="crispEdges"><defs><linearGradient id="cg" x1="0" x2="1"><stop offset="0" stop-color="#B8B8B8"/><stop offset="0.15" stop-color="#ECECEC"/><stop offset="0.5" stop-color="#D8D8D8"/><stop offset="0.85" stop-color="#B0B0B0"/><stop offset="1" stop-color="#707070"/></linearGradient></defs><path d="M1 4L2 3h2V2h12l1 1v11l-1 1H3l-2-1z" fill="url(#cg)" stroke="#7A7A7A" stroke-width="1" shape-rendering="geometricPrecision"/><path d="M4 3h12" stroke="#9A9A9A" stroke-width="1"/><circle cx="11.5" cy="7.5" r="3.2" fill="#3A3A3A" shape-rendering="geometricPrecision"/><circle cx="11.6" cy="7.2" r="1.3" fill="#1E6CF0" shape-rendering="geometricPrecision"/><path d="M9 13.5L13 9.5V12h5v3h-5v2.5z" fill="#008000" stroke="#fff" stroke-width="0.8" shape-rendering="geometricPrecision"/></svg><div class="t" style="left:45px;top:340px">GetObjectInfo</div><div class="t" style="left:250px;top:340px">1</div><div class="t" style="left:302px;top:340px">2</div><div class="t" style="left:360px;top:340px">OK</div><div class="t" style="left:411px;top:340px">FS</div><div class="t" style="left:457px;top:340px">5.647 397 633</div><div class="pbox" style="top:362px"></div><svg class="ic" style="left:21px;top:357px" width="18" height="18" viewBox="0 0 18 18" shape-rendering="crispEdges"><defs><linearGradient id="cg" x1="0" x2="1"><stop offset="0" stop-color="#B8B8B8"/><stop offset="0.15" stop-color="#ECECEC"/><stop offset="0.5" stop-color="#D8D8D8"/><stop offset="0.85" stop-color="#B0B0B0"/><stop offset="1" stop-color="#707070"/></linearGradient></defs><path d="M1 4L2 3h2V2h12l1 1v11l-1 1H3l-2-1z" fill="url(#cg)" stroke="#7A7A7A" stroke-width="1" shape-rendering="geometricPrecision"/><path d="M4 3h12" stroke="#9A9A9A" stroke-width="1"/><circle cx="11.5" cy="7.5" r="3.2" fill="#3A3A3A" shape-rendering="geometricPrecision"/><circle cx="11.6" cy="7.2" r="1.3" fill="#1E6CF0" shape-rendering="geometricPrecision"/><path d="M9 13.5L13 9.5V12h5v3h-5v2.5z" fill="#008000" stroke="#fff" stroke-width="0.8" shape-rendering="geometricPrecision"/></svg><div class="t" style="left:45px;top:358px">GetObjectInfo</div><div class="t" style="left:250px;top:358px">1</div><div class="t" style="left:302px;top:358px">2</div><div class="t" style="left:360px;top:358px">OK</div><div class="t" style="left:411px;top:358px">FS</div><div class="t" style="left:457px;top:358px">5.661 369 416</div><div class="pbox" style="top:380px"></div><svg class="ic" style="left:21px;top:375px" width="18" height="18" viewBox="0 0 18 18" shape-rendering="crispEdges"><defs><linearGradient id="cg" x1="0" x2="1"><stop offset="0" stop-color="#B8B8B8"/><stop offset="0.15" stop-color="#ECECEC"/><stop offset="0.5" stop-color="#D8D8D8"/><stop offset="0.85" stop-color="#B0B0B0"/><stop offset="1" stop-color="#707070"/></linearGradient></defs><path d="M1 4L2 3h2V2h12l1 1v11l-1 1H3l-2-1z" fill="url(#cg)" stroke="#7A7A7A" stroke-width="1" shape-rendering="geometricPrecision"/><path d="M4 3h12" stroke="#9A9A9A" stroke-width="1"/><circle cx="11.5" cy="7.5" r="3.2" fill="#3A3A3A" shape-rendering="geometricPrecision"/><circle cx="11.6" cy="7.2" r="1.3" fill="#1E6CF0" shape-rendering="geometricPrecision"/><path d="M9 13.5L13 9.5V12h5v3h-5v2.5z" fill="#008000" stroke="#fff" stroke-width="0.8" shape-rendering="geometricPrecision"/></svg><div class="t" style="left:45px;top:376px">GetStorageInfo</div><div class="t" style="left:250px;top:376px">1</div><div class="t" style="left:302px;top:376px">2</div><div class="t" style="left:360px;top:376px">OK</div><div class="t" style="left:411px;top:376px">FS</div><div class="t" style="left:457px;top:376px">5.744 367 666</div><div class="pbox" style="top:398px"></div><svg class="ic" style="left:21px;top:393px" width="18" height="18" viewBox="0 0 18 18" shape-rendering="crispEdges"><defs><linearGradient id="cg" x1="0" x2="1"><stop offset="0" stop-color="#B8B8B8"/><stop offset="0.15" stop-color="#ECECEC"/><stop offset="0.5" stop-color="#D8D8D8"/><stop offset="0.85" stop-color="#B0B0B0"/><stop offset="1" stop-color="#707070"/></linearGradient></defs><path d="M1 4L2 3h2V2h12l1 1v11l-1 1H3l-2-1z" fill="url(#cg)" stroke="#7A7A7A" stroke-width="1" shape-rendering="geometricPrecision"/><path d="M4 3h12" stroke="#9A9A9A" stroke-width="1"/><circle cx="11.5" cy="7.5" r="3.2" fill="#3A3A3A" shape-rendering="geometricPrecision"/><circle cx="11.6" cy="7.2" r="1.3" fill="#1E6CF0" shape-rendering="geometricPrecision"/><path d="M9 13.5L13 9.5V12h5v3h-5v2.5z" fill="#008000" stroke="#fff" stroke-width="0.8" shape-rendering="geometricPrecision"/></svg><div class="t" style="left:45px;top:394px">GetObjectInfo</div><div class="t" style="left:250px;top:394px">1</div><div class="t" style="left:302px;top:394px">2</div><div class="t" style="left:360px;top:394px">OK</div><div class="t" style="left:411px;top:394px">FS</div><div class="t" style="left:457px;top:394px">5.749 367 766</div><div class="pbox" style="top:416px"></div><svg class="ic" style="left:21px;top:411px" width="18" height="18" viewBox="0 0 18 18" shape-rendering="crispEdges"><defs><linearGradient id="cg" x1="0" x2="1"><stop offset="0" stop-color="#B8B8B8"/><stop offset="0.15" stop-color="#ECECEC"/><stop offset="0.5" stop-color="#D8D8D8"/><stop offset="0.85" stop-color="#B0B0B0"/><stop offset="1" stop-color="#707070"/></linearGradient></defs><path d="M1 4L2 3h2V2h12l1 1v11l-1 1H3l-2-1z" fill="url(#cg)" stroke="#7A7A7A" stroke-width="1" shape-rendering="geometricPrecision"/><path d="M4 3h12" stroke="#9A9A9A" stroke-width="1"/><circle cx="11.5" cy="7.5" r="3.2" fill="#3A3A3A" shape-rendering="geometricPrecision"/><circle cx="11.6" cy="7.2" r="1.3" fill="#1E6CF0" shape-rendering="geometricPrecision"/><path d="M9 13.5L13 9.5V12h5v3h-5v2.5z" fill="#008000" stroke="#fff" stroke-width="0.8" shape-rendering="geometricPrecision"/></svg><div class="t" style="left:45px;top:412px">GetStorageInfo</div><div class="t" style="left:250px;top:412px">1</div><div class="t" style="left:302px;top:412px">2</div><div class="t" style="left:360px;top:412px">OK</div><div class="t" style="left:411px;top:412px">FS</div><div class="t" style="left:457px;top:412px">5.760 366 483</div><div class="pbox" style="top:434px"></div><svg class="ic" style="left:21px;top:429px" width="18" height="18" viewBox="0 0 18 18" shape-rendering="crispEdges"><defs><linearGradient id="cg" x1="0" x2="1"><stop offset="0" stop-color="#B8B8B8"/><stop offset="0.15" stop-color="#ECECEC"/><stop offset="0.5" stop-color="#D8D8D8"/><stop offset="0.85" stop-color="#B0B0B0"/><stop offset="1" stop-color="#707070"/></linearGradient></defs><path d="M1 4L2 3h2V2h12l1 1v11l-1 1H3l-2-1z" fill="url(#cg)" stroke="#7A7A7A" stroke-width="1" shape-rendering="geometricPrecision"/><path d="M4 3h12" stroke="#9A9A9A" stroke-width="1"/><circle cx="11.5" cy="7.5" r="3.2" fill="#3A3A3A" shape-rendering="geometricPrecision"/><circle cx="11.6" cy="7.2" r="1.3" fill="#1E6CF0" shape-rendering="geometricPrecision"/><path d="M18 13.5L14 9.5V12H9v3h5v2.5z" fill="#000080" stroke="#fff" stroke-width="0.8" shape-rendering="geometricPrecision"/></svg><div class="t" style="left:45px;top:430px">CloseSession</div><div class="t" style="left:250px;top:430px">1</div><div class="t" style="left:302px;top:430px">2</div><div class="t" style="left:360px;top:430px">OK</div><div class="t" style="left:411px;top:430px">FS</div><div class="t" style="left:457px;top:430px">5.775 940 633</div><div class="pbox" style="top:452px"></div><svg class="ic" style="left:21px;top:447px" width="18" height="18" viewBox="0 0 18 18" shape-rendering="crispEdges"><defs><linearGradient id="cg" x1="0" x2="1"><stop offset="0" stop-color="#B8B8B8"/><stop offset="0.15" stop-color="#ECECEC"/><stop offset="0.5" stop-color="#D8D8D8"/><stop offset="0.85" stop-color="#B0B0B0"/><stop offset="1" stop-color="#707070"/></linearGradient></defs><path d="M1 4L2 3h2V2h12l1 1v11l-1 1H3l-2-1z" fill="url(#cg)" stroke="#7A7A7A" stroke-width="1" shape-rendering="geometricPrecision"/><path d="M4 3h12" stroke="#9A9A9A" stroke-width="1"/><circle cx="11.5" cy="7.5" r="3.2" fill="#3A3A3A" shape-rendering="geometricPrecision"/><circle cx="11.6" cy="7.2" r="1.3" fill="#1E6CF0" shape-rendering="geometricPrecision"/><path d="M18 13.5L14 9.5V12H9v3h5v2.5z" fill="#000080" stroke="#fff" stroke-width="0.8" shape-rendering="geometricPrecision"/></svg><div class="t" style="left:45px;top:448px">OpenSession</div><div class="t" style="left:250px;top:448px">1</div><div class="t" style="left:302px;top:448px">2</div><div class="t" style="left:360px;top:448px">OK</div><div class="t" style="left:411px;top:448px">FS</div><div class="t" style="left:457px;top:448px">12.656 145 666</div><div class="pbox" style="top:470px"></div><svg class="ic" style="left:21px;top:465px" width="18" height="18" viewBox="0 0 18 18" shape-rendering="crispEdges"><defs><linearGradient id="cg" x1="0" x2="1"><stop offset="0" stop-color="#B8B8B8"/><stop offset="0.15" stop-color="#ECECEC"/><stop offset="0.5" stop-color="#D8D8D8"/><stop offset="0.85" stop-color="#B0B0B0"/><stop offset="1" stop-color="#707070"/></linearGradient></defs><path d="M1 4L2 3h2V2h12l1 1v11l-1 1H3l-2-1z" fill="url(#cg)" stroke="#7A7A7A" stroke-width="1" shape-rendering="geometricPrecision"/><path d="M4 3h12" stroke="#9A9A9A" stroke-width="1"/><circle cx="11.5" cy="7.5" r="3.2" fill="#3A3A3A" shape-rendering="geometricPrecision"/><circle cx="11.6" cy="7.2" r="1.3" fill="#1E6CF0" shape-rendering="geometricPrecision"/><path d="M9 13.5L13 9.5V12h5v3h-5v2.5z" fill="#008000" stroke="#fff" stroke-width="0.8" shape-rendering="geometricPrecision"/></svg><div class="t" style="left:45px;top:466px">GetDeviceInfo</div><div class="t" style="left:250px;top:466px">1</div><div class="t" style="left:302px;top:466px">2</div><div class="t" style="left:360px;top:466px">OK</div><div class="t" style="left:411px;top:466px">FS</div><div class="t" style="left:457px;top:466px">12.661 519 933</div><div class="pbox" style="top:488px"></div><svg class="ic" style="left:21px;top:483px" width="18" height="18" viewBox="0 0 18 18" shape-rendering="crispEdges"><defs><linearGradient id="cg" x1="0" x2="1"><stop offset="0" stop-color="#B8B8B8"/><stop offset="0.15" stop-color="#ECECEC"/><stop offset="0.5" stop-color="#D8D8D8"/><stop offset="0.85" stop-color="#B0B0B0"/><stop offset="1" stop-color="#707070"/></linearGradient></defs><path d="M1 4L2 3h2V2h12l1 1v11l-1 1H3l-2-1z" fill="url(#cg)" stroke="#7A7A7A" stroke-width="1" shape-rendering="geometricPrecision"/><path d="M4 3h12" stroke="#9A9A9A" stroke-width="1"/><circle cx="11.5" cy="7.5" r="3.2" fill="#3A3A3A" shape-rendering="geometricPrecision"/><circle cx="11.6" cy="7.2" r="1.3" fill="#1E6CF0" shape-rendering="geometricPrecision"/><path d="M9 13.5L13 9.5V12h5v3h-5v2.5z" fill="#008000" stroke="#fff" stroke-width="0.8" shape-rendering="geometricPrecision"/></svg><div class="t" style="left:45px;top:484px">GetStorageIDs</div><div class="t" style="left:250px;top:484px">1</div><div class="t" style="left:302px;top:484px">2</div><div class="t" style="left:360px;top:484px">OK</div><div class="t" style="left:411px;top:484px">FS</div><div class="t" style="left:457px;top:484px">12.691 091 699</div><div class="pbox" style="top:506px"></div><svg class="ic" style="left:21px;top:501px" width="18" height="18" viewBox="0 0 18 18" shape-rendering="crispEdges"><defs><linearGradient id="cg" x1="0" x2="1"><stop offset="0" stop-color="#B8B8B8"/><stop offset="0.15" stop-color="#ECECEC"/><stop offset="0.5" stop-color="#D8D8D8"/><stop offset="0.85" stop-color="#B0B0B0"/><stop offset="1" stop-color="#707070"/></linearGradient></defs><path d="M1 4L2 3h2V2h12l1 1v11l-1 1H3l-2-1z" fill="url(#cg)" stroke="#7A7A7A" stroke-width="1" shape-rendering="geometricPrecision"/><path d="M4 3h12" stroke="#9A9A9A" stroke-width="1"/><circle cx="11.5" cy="7.5" r="3.2" fill="#3A3A3A" shape-rendering="geometricPrecision"/><circle cx="11.6" cy="7.2" r="1.3" fill="#1E6CF0" shape-rendering="geometricPrecision"/><path d="M9 13.5L13 9.5V12h5v3h-5v2.5z" fill="#008000" stroke="#fff" stroke-width="0.8" shape-rendering="geometricPrecision"/></svg><div class="t" style="left:45px;top:502px">GetStorageInfo</div><div class="t" style="left:250px;top:502px">1</div><div class="t" style="left:302px;top:502px">2</div><div class="t" style="left:360px;top:502px">OK</div><div class="t" style="left:411px;top:502px">FS</div><div class="t" style="left:457px;top:502px">12.695 463 200</div><div class="pbox" style="top:524px"></div><svg class="ic" style="left:21px;top:519px" width="18" height="18" viewBox="0 0 18 18" shape-rendering="crispEdges"><defs><linearGradient id="cg" x1="0" x2="1"><stop offset="0" stop-color="#B8B8B8"/><stop offset="0.15" stop-color="#ECECEC"/><stop offset="0.5" stop-color="#D8D8D8"/><stop offset="0.85" stop-color="#B0B0B0"/><stop offset="1" stop-color="#707070"/></linearGradient></defs><path d="M1 4L2 3h2V2h12l1 1v11l-1 1H3l-2-1z" fill="url(#cg)" stroke="#7A7A7A" stroke-width="1" shape-rendering="geometricPrecision"/><path d="M4 3h12" stroke="#9A9A9A" stroke-width="1"/><circle cx="11.5" cy="7.5" r="3.2" fill="#3A3A3A" shape-rendering="geometricPrecision"/><circle cx="11.6" cy="7.2" r="1.3" fill="#1E6CF0" shape-rendering="geometricPrecision"/><path d="M9 13.5L13 9.5V12h5v3h-5v2.5z" fill="#008000" stroke="#fff" stroke-width="0.8" shape-rendering="geometricPrecision"/></svg><div class="t" style="left:45px;top:520px">GetStorageInfo</div><div class="t" style="left:250px;top:520px">1</div><div class="t" style="left:302px;top:520px">2</div><div class="t" style="left:360px;top:520px">OK</div><div class="t" style="left:411px;top:520px">FS</div><div class="t" style="left:457px;top:520px">12.700 465 050</div><div class="pbox" style="top:542px"></div><svg class="ic" style="left:21px;top:537px" width="18" height="18" viewBox="0 0 18 18" shape-rendering="crispEdges"><defs><linearGradient id="cg" x1="0" x2="1"><stop offset="0" stop-color="#B8B8B8"/><stop offset="0.15" stop-color="#ECECEC"/><stop offset="0.5" stop-color="#D8D8D8"/><stop offset="0.85" stop-color="#B0B0B0"/><stop offset="1" stop-color="#707070"/></linearGradient></defs><path d="M1 4L2 3h2V2h12l1 1v11l-1 1H3l-2-1z" fill="url(#cg)" stroke="#7A7A7A" stroke-width="1" shape-rendering="geometricPrecision"/><path d="M4 3h12" stroke="#9A9A9A" stroke-width="1"/><circle cx="11.5" cy="7.5" r="3.2" fill="#3A3A3A" shape-rendering="geometricPrecision"/><circle cx="11.6" cy="7.2" r="1.3" fill="#1E6CF0" shape-rendering="geometricPrecision"/><path d="M9 13.5L13 9.5V12h5v3h-5v2.5z" fill="#008000" stroke="#fff" stroke-width="0.8" shape-rendering="geometricPrecision"/></svg><div class="t" style="left:45px;top:538px">GetObjectHandles</div><div class="t" style="left:250px;top:538px">1</div><div class="t" style="left:302px;top:538px">2</div><div class="t" style="left:360px;top:538px">OK</div><div class="t" style="left:411px;top:538px">FS</div><div class="t" style="left:457px;top:538px">12.705 505 566</div><div class="pbox" style="top:560px"></div><svg class="ic" style="left:21px;top:555px" width="18" height="18" viewBox="0 0 18 18" shape-rendering="crispEdges"><defs><linearGradient id="cg" x1="0" x2="1"><stop offset="0" stop-color="#B8B8B8"/><stop offset="0.15" stop-color="#ECECEC"/><stop offset="0.5" stop-color="#D8D8D8"/><stop offset="0.85" stop-color="#B0B0B0"/><stop offset="1" stop-color="#707070"/></linearGradient></defs><path d="M1 4L2 3h2V2h12l1 1v11l-1 1H3l-2-1z" fill="url(#cg)" stroke="#7A7A7A" stroke-width="1" shape-rendering="geometricPrecision"/><path d="M4 3h12" stroke="#9A9A9A" stroke-width="1"/><circle cx="11.5" cy="7.5" r="3.2" fill="#3A3A3A" shape-rendering="geometricPrecision"/><circle cx="11.6" cy="7.2" r="1.3" fill="#1E6CF0" shape-rendering="geometricPrecision"/><path d="M9 13.5L13 9.5V12h5v3h-5v2.5z" fill="#008000" stroke="#fff" stroke-width="0.8" shape-rendering="geometricPrecision"/></svg><div class="t" style="left:45px;top:556px">GetObjectInfo</div><div class="t" style="left:250px;top:556px">1</div><div class="t" style="left:302px;top:556px">2</div><div class="t" style="left:360px;top:556px">OK</div><div class="t" style="left:411px;top:556px">FS</div><div class="t" style="left:457px;top:556px">12.714 473 500</div><div class="pbox" style="top:578px"></div><svg class="ic" style="left:21px;top:573px" width="18" height="18" viewBox="0 0 18 18" shape-rendering="crispEdges"><defs><linearGradient id="cg" x1="0" x2="1"><stop offset="0" stop-color="#B8B8B8"/><stop offset="0.15" stop-color="#ECECEC"/><stop offset="0.5" stop-color="#D8D8D8"/><stop offset="0.85" stop-color="#B0B0B0"/><stop offset="1" stop-color="#707070"/></linearGradient></defs><path d="M1 4L2 3h2V2h12l1 1v11l-1 1H3l-2-1z" fill="url(#cg)" stroke="#7A7A7A" stroke-width="1" shape-rendering="geometricPrecision"/><path d="M4 3h12" stroke="#9A9A9A" stroke-width="1"/><circle cx="11.5" cy="7.5" r="3.2" fill="#3A3A3A" shape-rendering="geometricPrecision"/><circle cx="11.6" cy="7.2" r="1.3" fill="#1E6CF0" shape-rendering="geometricPrecision"/><path d="M9 13.5L13 9.5V12h5v3h-5v2.5z" fill="#008000" stroke="#fff" stroke-width="0.8" shape-rendering="geometricPrecision"/></svg><div class="t" style="left:45px;top:574px">GetObjectInfo</div><div class="t" style="left:250px;top:574px">1</div><div class="t" style="left:302px;top:574px">2</div><div class="t" style="left:360px;top:574px">OK</div><div class="t" style="left:411px;top:574px">FS</div><div class="t" style="left:457px;top:574px">12.721 472 549</div><div class="pbox" style="top:596px"></div><svg class="ic" style="left:21px;top:591px" width="18" height="18" viewBox="0 0 18 18" shape-rendering="crispEdges"><defs><linearGradient id="cg" x1="0" x2="1"><stop offset="0" stop-color="#B8B8B8"/><stop offset="0.15" stop-color="#ECECEC"/><stop offset="0.5" stop-color="#D8D8D8"/><stop offset="0.85" stop-color="#B0B0B0"/><stop offset="1" stop-color="#707070"/></linearGradient></defs><path d="M1 4L2 3h2V2h12l1 1v11l-1 1H3l-2-1z" fill="url(#cg)" stroke="#7A7A7A" stroke-width="1" shape-rendering="geometricPrecision"/><path d="M4 3h12" stroke="#9A9A9A" stroke-width="1"/><circle cx="11.5" cy="7.5" r="3.2" fill="#3A3A3A" shape-rendering="geometricPrecision"/><circle cx="11.6" cy="7.2" r="1.3" fill="#1E6CF0" shape-rendering="geometricPrecision"/><path d="M9 13.5L13 9.5V12h5v3h-5v2.5z" fill="#008000" stroke="#fff" stroke-width="0.8" shape-rendering="geometricPrecision"/></svg><div class="t" style="left:45px;top:592px">GetObjectInfo</div><div class="t" style="left:250px;top:592px">1</div><div class="t" style="left:302px;top:592px">2</div><div class="t" style="left:360px;top:592px">OK</div><div class="t" style="left:411px;top:592px">FS</div><div class="t" style="left:457px;top:592px">12.728 514 450</div><div class="pbox" style="top:614px"></div><svg class="ic" style="left:21px;top:609px" width="18" height="18" viewBox="0 0 18 18" shape-rendering="crispEdges"><defs><linearGradient id="cg" x1="0" x2="1"><stop offset="0" stop-color="#B8B8B8"/><stop offset="0.15" stop-color="#ECECEC"/><stop offset="0.5" stop-color="#D8D8D8"/><stop offset="0.85" stop-color="#B0B0B0"/><stop offset="1" stop-color="#707070"/></linearGradient></defs><path d="M1 4L2 3h2V2h12l1 1v11l-1 1H3l-2-1z" fill="url(#cg)" stroke="#7A7A7A" stroke-width="1" shape-rendering="geometricPrecision"/><path d="M4 3h12" stroke="#9A9A9A" stroke-width="1"/><circle cx="11.5" cy="7.5" r="3.2" fill="#3A3A3A" shape-rendering="geometricPrecision"/><circle cx="11.6" cy="7.2" r="1.3" fill="#1E6CF0" shape-rendering="geometricPrecision"/><path d="M9 13.5L13 9.5V12h5v3h-5v2.5z" fill="#008000" stroke="#fff" stroke-width="0.8" shape-rendering="geometricPrecision"/></svg><div class="t" style="left:45px;top:610px">GetStorageInfo</div><div class="t" style="left:250px;top:610px">1</div><div class="t" style="left:302px;top:610px">2</div><div class="t" style="left:360px;top:610px">OK</div><div class="t" style="left:411px;top:610px">FS</div><div class="t" style="left:457px;top:610px">12.736 470 183</div><div class="pbox" style="top:632px"></div><svg class="ic" style="left:21px;top:627px" width="18" height="18" viewBox="0 0 18 18" shape-rendering="crispEdges"><defs><linearGradient id="cg" x1="0" x2="1"><stop offset="0" stop-color="#B8B8B8"/><stop offset="0.15" stop-color="#ECECEC"/><stop offset="0.5" stop-color="#D8D8D8"/><stop offset="0.85" stop-color="#B0B0B0"/><stop offset="1" stop-color="#707070"/></linearGradient></defs><path d="M1 4L2 3h2V2h12l1 1v11l-1 1H3l-2-1z" fill="url(#cg)" stroke="#7A7A7A" stroke-width="1" shape-rendering="geometricPrecision"/><path d="M4 3h12" stroke="#9A9A9A" stroke-width="1"/><circle cx="11.5" cy="7.5" r="3.2" fill="#3A3A3A" shape-rendering="geometricPrecision"/><circle cx="11.6" cy="7.2" r="1.3" fill="#1E6CF0" shape-rendering="geometricPrecision"/><path d="M9 13.5L13 9.5V12h5v3h-5v2.5z" fill="#008000" stroke="#fff" stroke-width="0.8" shape-rendering="geometricPrecision"/></svg><div class="t" style="left:45px;top:628px">GetObjectInfo</div><div class="t" style="left:250px;top:628px">1</div><div class="t" style="left:302px;top:628px">2</div><div class="t" style="left:360px;top:628px">OK</div><div class="t" style="left:411px;top:628px">FS</div><div class="t" style="left:457px;top:628px">12.743 510 083</div><div class="pbox" style="top:650px"></div><svg class="ic" style="left:21px;top:645px" width="18" height="18" viewBox="0 0 18 18" shape-rendering="crispEdges"><defs><linearGradient id="cg" x1="0" x2="1"><stop offset="0" stop-color="#B8B8B8"/><stop offset="0.15" stop-color="#ECECEC"/><stop offset="0.5" stop-color="#D8D8D8"/><stop offset="0.85" stop-color="#B0B0B0"/><stop offset="1" stop-color="#707070"/></linearGradient></defs><path d="M1 4L2 3h2V2h12l1 1v11l-1 1H3l-2-1z" fill="url(#cg)" stroke="#7A7A7A" stroke-width="1" shape-rendering="geometricPrecision"/><path d="M4 3h12" stroke="#9A9A9A" stroke-width="1"/><circle cx="11.5" cy="7.5" r="3.2" fill="#3A3A3A" shape-rendering="geometricPrecision"/><circle cx="11.6" cy="7.2" r="1.3" fill="#1E6CF0" shape-rendering="geometricPrecision"/><path d="M9 13.5L13 9.5V12h5v3h-5v2.5z" fill="#008000" stroke="#fff" stroke-width="0.8" shape-rendering="geometricPrecision"/></svg><div class="t" style="left:45px;top:646px">GetStorageInfo</div><div class="t" style="left:250px;top:646px">1</div><div class="t" style="left:302px;top:646px">2</div><div class="t" style="left:360px;top:646px">OK</div><div class="t" style="left:411px;top:646px">FS</div><div class="t" style="left:457px;top:646px">12.750 508 966</div><div class="pbox" style="top:668px"></div><svg class="ic" style="left:21px;top:663px" width="18" height="18" viewBox="0 0 18 18" shape-rendering="crispEdges"><defs><linearGradient id="cg" x1="0" x2="1"><stop offset="0" stop-color="#B8B8B8"/><stop offset="0.15" stop-color="#ECECEC"/><stop offset="0.5" stop-color="#D8D8D8"/><stop offset="0.85" stop-color="#B0B0B0"/><stop offset="1" stop-color="#707070"/></linearGradient></defs><path d="M1 4L2 3h2V2h12l1 1v11l-1 1H3l-2-1z" fill="url(#cg)" stroke="#7A7A7A" stroke-width="1" shape-rendering="geometricPrecision"/><path d="M4 3h12" stroke="#9A9A9A" stroke-width="1"/><circle cx="11.5" cy="7.5" r="3.2" fill="#3A3A3A" shape-rendering="geometricPrecision"/><circle cx="11.6" cy="7.2" r="1.3" fill="#1E6CF0" shape-rendering="geometricPrecision"/><path d="M9 13.5L13 9.5V12h5v3h-5v2.5z" fill="#008000" stroke="#fff" stroke-width="0.8" shape-rendering="geometricPrecision"/></svg><div class="t" style="left:45px;top:664px">GetThumb</div><div class="t" style="left:250px;top:664px">1</div><div class="t" style="left:302px;top:664px">2</div><div class="t" style="left:360px;top:664px">OK</div><div class="t" style="left:411px;top:664px">FS</div><div class="t" style="left:457px;top:664px">12.804 392 616</div><div class="pbox" style="top:686px"></div><svg class="ic" style="left:21px;top:681px" width="18" height="18" viewBox="0 0 18 18" shape-rendering="crispEdges"><defs><linearGradient id="cg" x1="0" x2="1"><stop offset="0" stop-color="#B8B8B8"/><stop offset="0.15" stop-color="#ECECEC"/><stop offset="0.5" stop-color="#D8D8D8"/><stop offset="0.85" stop-color="#B0B0B0"/><stop offset="1" stop-color="#707070"/></linearGradient></defs><path d="M1 4L2 3h2V2h12l1 1v11l-1 1H3l-2-1z" fill="url(#cg)" stroke="#7A7A7A" stroke-width="1" shape-rendering="geometricPrecision"/><path d="M4 3h12" stroke="#9A9A9A" stroke-width="1"/><circle cx="11.5" cy="7.5" r="3.2" fill="#3A3A3A" shape-rendering="geometricPrecision"/><circle cx="11.6" cy="7.2" r="1.3" fill="#1E6CF0" shape-rendering="geometricPrecision"/><path d="M9 13.5L13 9.5V12h5v3h-5v2.5z" fill="#008000" stroke="#fff" stroke-width="0.8" shape-rendering="geometricPrecision"/></svg><div class="t" style="left:45px;top:682px">GetObject</div><div class="t" style="left:250px;top:682px">1</div><div class="t" style="left:302px;top:682px">2</div><div class="t" style="left:360px;top:682px">OK</div><div class="t" style="left:411px;top:682px">FS</div><div class="t" style="left:457px;top:682px">21.740 958 049</div>
<!-- grid scrollbar -->
<div class="strack" style="left:547px;top:82px;width:17px;height:619px"></div>
<div class="sbtn" style="left:548px;top:82px"><svg style="left:3px;top:5px" width="9" height="6"><path d="M0.5 5L4.5 1 8.5 5" fill="none" stroke="#4D6185" stroke-width="2"/></svg></div>
<div class="sthumb" style="left:548px;top:264px;width:16px;height:406px"><div style="left:4px;top:197px;width:7px;height:9px;background:repeating-linear-gradient(to bottom,#EEF4FE 0,#EEF4FE 1px,#8CB0F8 1px,#8CB0F8 2px)"></div></div>
<div class="sbtn" style="left:548px;top:684px"><svg style="left:3px;top:5px" width="9" height="6"><path d="M0.5 1L4.5 5 8.5 1" fill="none" stroke="#4D6185" stroke-width="2"/></svg></div>

<!-- details panel -->
<div class="phdr" style="left:570px;top:82px;width:425px"></div>
<div class="ptitle" style="left:574px;top:84px">Details</div>
<svg style="left:966px;top:86px" width="9" height="10" viewBox="0 0 9 10"><path d="M2 0h5v5h2v1H0V5h2zM4 6h1v4H4z" fill="#000"/><rect x="4" y="1" width="2" height="4" fill="#fff"/></svg>
<svg style="left:982px;top:87px" width="8" height="8"><path d="M0.5 0.5L7.5 7.5M7.5 0.5L0.5 7.5" stroke="#000" stroke-width="1.2"/></svg>
<div class="pbody" style="left:570px;top:100px;width:425px;height:402px"></div>
<div class="strack" style="left:976px;top:102px;width:17px;height:398px;background:#FAFAF6"></div>
<div class="sdis" style="left:977px;top:103px"><svg style="left:3px;top:5px" width="9" height="6"><path d="M0.5 5L4.5 1 8.5 5" fill="none" stroke="#C9C8C0" stroke-width="2"/></svg></div>
<div class="sdis" style="left:977px;top:482px"><svg style="left:3px;top:5px" width="9" height="6"><path d="M0.5 1L4.5 5 8.5 1" fill="none" stroke="#C9C8C0" stroke-width="2"/></svg></div>

<div style="left:582px;top:118px;font-size:15px;color:#3366CC;line-height:18px;white-space:nowrap;letter-spacing:1.15px;transform:scaleX(1.08);transform-origin:0 0">GetDeviceInfo</div>
<div style="left:582px;top:135px;width:384px;height:1px;background:#3366CC"></div>

<div class="dh" style="left:582px;top:155px;width:384px"></div>
<div class="vt vtb" style="left:608px;top:161px">Still Image Data</div>
<div class="dr" style="left:582px;top:180px;width:384px;height:24px"></div>
<div class="dv" style="left:764px;top:180px;height:23px"></div>
<div class="vt" style="left:608px;top:185px">Payload</div>
<div class="vt" style="left:768px;top:185px">DeviceInfo</div>

<div class="dh" style="left:582px;top:223px;width:384px"></div>
<div class="vt vtb" style="left:608px;top:229px">DeviceInfo</div>
<div class="dr" style="left:582px;top:248px;width:384px;height:24px"></div><div class="vt" style="left:608px;top:253px">StandardVersion</div><div class="vt" style="left:771px;top:253px">1.00</div><div class="dr y" style="left:582px;top:272px;width:384px;height:24px"></div><div class="vt" style="left:608px;top:277px">VendorExtensionID</div><div class="vt" style="left:771px;top:277px">Canon</div><div class="dr" style="left:582px;top:296px;width:384px;height:24px"></div><div class="vt" style="left:608px;top:301px">VendorExtensionVersion</div><div class="vt" style="left:771px;top:301px">1.00</div><div class="dr" style="left:582px;top:320px;width:384px;height:24px"></div><div class="vt" style="left:608px;top:325px">FunctionalMode</div><div class="vt" style="left:771px;top:325px">Standard Mode</div><div class="dr" style="left:582px;top:344px;width:384px;height:24px"></div><div class="vt" style="left:608px;top:349px">Manufacturer. StringChars</div><div class="vt" style="left:771px;top:349px">"Canon Inc."</div><div class="dr" style="left:582px;top:368px;width:384px;height:24px"></div><div class="vt" style="left:608px;top:373px">Model. StringChars</div><div class="vt" style="left:771px;top:373px">"Canon DIGITAL IXUS IIs"</div><div class="dr" style="left:582px;top:392px;width:384px;height:41px"></div><div class="vt" style="left:608px;top:396px;line-height:17px">DeviceVersion.<br>StringChars</div><div class="vt" style="left:771px;top:396px;line-height:17px">"1-1.0.0.0"</div><div class="dv" style="left:767px;top:248px;height:184px"></div>
<svg style="left:927px;top:164px" width="9" height="9" viewBox="0 0 9 9"><path d="M1 1l3.5 3 3.5-3M1 5l3.5 3 3.5-3" fill="none" stroke="#fff" stroke-width="1.4"/></svg><svg style="left:947px;top:164px" width="10" height="9" viewBox="0 0 10 9"><path d="M1 1l3 3.5-3 3.5M5 1l3 3.5-3 3.5" fill="none" stroke="#fff" stroke-width="1.4"/></svg><svg style="left:927px;top:232px" width="9" height="9" viewBox="0 0 9 9"><path d="M1 1l3.5 3 3.5-3M1 5l3.5 3 3.5-3" fill="none" stroke="#fff" stroke-width="1.4"/></svg><svg style="left:947px;top:232px" width="10" height="9" viewBox="0 0 10 9"><path d="M1 1l3 3.5-3 3.5M5 1l3 3.5-3 3.5" fill="none" stroke="#fff" stroke-width="1.4"/></svg>

<!-- tabs -->
<div style="left:570px;top:503px;width:425px;height:22px;background:#FCFAEE;border-top:1px solid #000"></div>
<div style="left:573px;top:503px;width:61px;height:20px;background:#ECE9D8;border-left:1px solid #fff;border-right:1px solid #000;border-bottom:1px solid #000;border-top:1px solid #ECE9D8"></div>
<svg style="left:579px;top:505px" width="15" height="16" viewBox="0 0 15 16"><rect x="0.5" y="0.5" width="14" height="11" fill="#fff" stroke="#5070B0"/><rect x="0" y="0" width="15" height="2" fill="#3060C0"/><circle cx="8" cy="7.5" r="3.5" fill="#D0E4F8" stroke="#7090B0"/><path d="M1 15l4-4" stroke="#E07030" stroke-width="2"/></svg>
<div class="tabt" style="left:597px;color:#000">Details</div>
<svg style="left:639px;top:505px" width="16" height="16" viewBox="0 0 16 16"><circle cx="10" cy="6" r="4.5" fill="#D8ECFC" stroke="#6088B8" stroke-width="1.3"/><path d="M1.5 14.5l5-5" stroke="#D87030" stroke-width="2.4"/></svg>
<div class="tabt" style="left:658px">Search</div>
<div class="ssep" style="left:695px;top:505px;height:16px"></div>
<svg style="left:700px;top:505px" width="17" height="16" viewBox="0 0 17 16"><circle cx="6" cy="10" r="5" fill="#2060D0"/><circle cx="6" cy="4.5" r="3.5" fill="#C0B020"/><circle cx="12" cy="5" r="3.5" fill="#30A050"/></svg>
<div class="tabt" style="left:719px">Export</div>
<div class="ssep" style="left:755px;top:505px;height:16px"></div>
<svg style="left:760px;top:505px" width="15" height="16" viewBox="0 0 15 16"><path d="M1 1h9v14H1z" fill="#3060C0" stroke="#203080"/><path d="M3 4h6v9H3z" fill="#fff"/><path d="M4 8l2 2 4-5" stroke="#E0A020" stroke-width="1.5" fill="none"/><path d="M10 5l4-2-1 4z" fill="#3060C0"/></svg>
<div class="tabt" style="left:778px">Options</div>
<div class="ssep" style="left:821px;top:505px;height:16px"></div>
<svg style="left:825px;top:505px" width="17" height="16" viewBox="0 0 17 16"><path d="M1 9l9-6 5 4-9 6z" fill="#9A9A9A" stroke="#505050"/><path d="M11 0l-3 7h3l-2 7 6-9h-3l2-5z" fill="#F0C020" stroke="#A07010" stroke-width="0.6"/></svg>
<div class="tabt" style="left:844px">Trigger</div>
<div class="ssep" style="left:882px;top:505px;height:16px"></div>

<!-- data panel -->
<div class="phdr" style="left:570px;top:531px;width:425px"></div>
<div class="ptitle" style="left:574px;top:533px">Data</div>
<svg style="left:966px;top:535px" width="9" height="10" viewBox="0 0 9 10"><path d="M2 0h5v5h2v1H0V5h2zM4 6h1v4H4z" fill="#000"/><rect x="4" y="1" width="2" height="4" fill="#fff"/></svg>
<svg style="left:982px;top:536px" width="8" height="8"><path d="M0.5 0.5L7.5 7.5M7.5 0.5L0.5 7.5" stroke="#000" stroke-width="1.2"/></svg>
<div class="pbody" style="left:570px;top:549px;width:425px;height:153px;background:#ECE9D8"></div>
<div style="left:572px;top:566px;width:404px;height:1px;background:#000"></div>
<div class="mono" style="left:629px;top:552px">0</div><div style="left:632px;top:563px;width:1px;height:3px;background:#000"></div><div class="mono" style="left:653px;top:552px">1</div><div style="left:656px;top:563px;width:1px;height:3px;background:#000"></div><div class="mono" style="left:677px;top:552px">2</div><div style="left:680px;top:563px;width:1px;height:3px;background:#000"></div><div class="mono" style="left:701px;top:552px">3</div><div style="left:704px;top:563px;width:1px;height:3px;background:#000"></div><div class="mono" style="left:725px;top:552px">4</div><div style="left:728px;top:563px;width:1px;height:3px;background:#000"></div><div class="mono" style="left:749px;top:552px">5</div><div style="left:752px;top:563px;width:1px;height:3px;background:#000"></div><div class="mono" style="left:773px;top:552px">6</div><div style="left:776px;top:563px;width:1px;height:3px;background:#000"></div><div class="mono" style="left:797px;top:552px">7</div><div style="left:800px;top:563px;width:1px;height:3px;background:#000"></div><div class="mono" style="left:821px;top:552px">8</div><div style="left:824px;top:563px;width:1px;height:3px;background:#000"></div><div class="mono" style="left:853px;top:552px">012345678</div><div style="left:856px;top:563px;width:1px;height:3px;background:#000"></div><div style="left:864px;top:563px;width:1px;height:3px;background:#000"></div><div style="left:872px;top:563px;width:1px;height:3px;background:#000"></div><div style="left:880px;top:563px;width:1px;height:3px;background:#000"></div><div style="left:888px;top:563px;width:1px;height:3px;background:#000"></div><div style="left:896px;top:563px;width:1px;height:3px;background:#000"></div><div style="left:904px;top:563px;width:1px;height:3px;background:#000"></div><div style="left:912px;top:563px;width:1px;height:3px;background:#000"></div><div style="left:920px;top:563px;width:1px;height:3px;background:#000"></div>
<div style="left:616px;top:567px;width:225px;height:134px;background:#fff"></div>
<div style="left:844px;top:567px;width:88px;height:134px;background:#fff"></div>
<div style="left:744px;top:583px;width:89px;height:16px;background:#FFFF80"></div>
<div style="left:892px;top:583px;width:32px;height:16px;background:#FFFF80"></div>
<div style="left:852px;top:568px;width:8px;height:15px;background:#E0E0E0"></div>
<div style="left:624px;top:567px;width:2px;height:16px;background:#C8C8C8"></div>
<div class="mono" style="left:573px;width:42px;text-align:right;top:568px">0:</div><div class="mono" style="left:625px;top:568px">49 01 00 00 02 00 01 10 00</div><div class="mono" style="left:853px;top:569px">I........</div><div class="mono" style="left:573px;width:42px;text-align:right;top:584px">9:</div><div class="mono" style="left:625px;top:584px">00 00 00 64 00 0B 00 00 00</div><div class="mono" style="left:853px;top:585px">...d.....</div><div class="mono" style="left:573px;width:42px;text-align:right;top:600px">18:</div><div class="mono" style="left:625px;top:600px">64 00 00 00 00 32 00 00 00</div><div class="mono" style="left:853px;top:601px">d....2...</div><div class="mono" style="left:573px;width:42px;text-align:right;top:616px">27:</div><div class="mono" style="left:625px;top:616px">01 10 02 10 03 10 04 10 05</div><div class="mono" style="left:853px;top:617px">.........</div><div class="mono" style="left:573px;width:42px;text-align:right;top:632px">36:</div><div class="mono" style="left:625px;top:632px">10 06 10 07 10 08 10 09 10</div><div class="mono" style="left:853px;top:633px">.........</div><div class="mono" style="left:573px;width:42px;text-align:right;top:648px">45:</div><div class="mono" style="left:625px;top:648px">0A 10 0B 10 0C 10 0D 10 0E</div><div class="mono" style="left:853px;top:649px">.........</div><div class="mono" style="left:573px;width:42px;text-align:right;top:664px">54:</div><div class="mono" style="left:625px;top:664px">10 0F 10 12 10 14 10 15 10</div><div class="mono" style="left:853px;top:665px">.........</div><div class="mono" style="left:573px;width:42px;text-align:right;top:680px">63:</div><div class="mono" style="left:625px;top:680px">16 10 1B 10 01 90 02 90 03</div><div class="mono" style="left:853px;top:681px">.........</div>
<div class="strack" style="left:976px;top:551px;width:17px;height:150px"></div>
<div class="sbtn" style="left:977px;top:552px"><svg style="left:3px;top:5px" width="9" height="6"><path d="M0.5 5L4.5 1 8.5 5" fill="none" stroke="#4D6185" stroke-width="2"/></svg></div>
<div class="sthumb" style="left:977px;top:569px;width:16px;height:24px"><div style="left:4px;top:7px;width:7px;height:9px;background:repeating-linear-gradient(to bottom,#EEF4FE 0,#EEF4FE 1px,#8CB0F8 1px,#8CB0F8 2px)"></div></div>
<div class="sbtn" style="left:977px;top:684px"><svg style="left:3px;top:5px" width="9" height="6"><path d="M0.5 1L4.5 5 8.5 1" fill="none" stroke="#4D6185" stroke-width="2"/></svg></div>

<!-- status bar -->
<div style="left:4px;top:702px;width:991px;height:1px;background:#fff"></div>
<div class="stxt" style="left:6px">Ready</div>
<div class="ssep" style="left:848px"></div>
<div class="stxt" style="left:854px;letter-spacing:-0.5px">NUM</div>
<div class="ssep" style="left:879px"></div>
<div class="ssep" style="left:912px"></div>
<div class="stxt" style="left:918px">2.0.1447.0</div>
<div class="ssep" style="left:974px"></div>
<svg style="left:982px;top:707px" width="12" height="12"><path d="M10 2h2v2h-2zM7 5h2v2H7zM10 5h2v2h-2zM4 8h2v2H4zM7 8h2v2H7zM10 8h2v2h-2z" fill="#C5C2B2"/></svg>
</body></html>
